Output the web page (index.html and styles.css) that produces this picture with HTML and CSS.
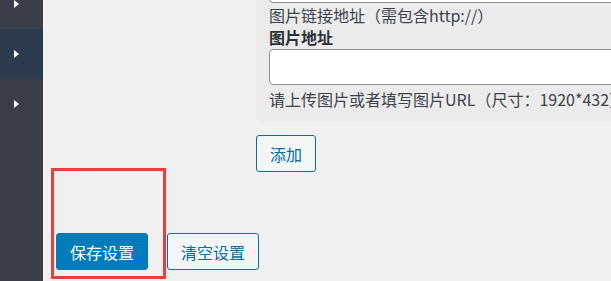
FILE: index.html
```html
<!DOCTYPE html>
<html lang="zh-CN">
<head>
<meta charset="utf-8">
<title>设置</title>
<link rel="stylesheet" href="styles.css">
</head>
<body>
<div class="layout">
  <nav class="sidebar">
    <div class="menu-item first"><span class="arrow"></span></div>
    <div class="menu-item active"><span class="arrow"></span></div>
    <div class="menu-item"><span class="arrow"></span></div>
  </nav>
  <main class="content">
    <div class="slide-panel">
      <div class="field-input top-input"></div>
      <p class="hint">图片链接地址（需包含http://）</p>
      <p class="label">图片地址</p>
      <div class="field-input"></div>
      <p class="hint hint-last">请上传图片或者填写图片URL（尺寸：1920*432）</p>
    </div>
    <div class="add-row">
      <button class="btn btn-secondary btn-add">添加</button>
    </div>
    <div class="actions">
      <button class="btn btn-primary btn-wide">保存设置</button>
      <button class="btn btn-secondary btn-wide">清空设置</button>
    </div>
    <div class="annotation"></div>
  </main>
</div>
</body>
</html>
```

FILE: styles.css
```css
html, body {
  margin: 0;
  padding: 0;
  height: 100%;
  overflow: hidden;
}
body {
  background: #f0f0f1;
  font-family: "Noto Sans CJK SC", "Noto Sans", sans-serif;
  font-size: 16px;
  color: #3c434a;
}
.layout {
  display: flex;
  height: 100%;
}
.sidebar {
  width: 43px;
  flex: 0 0 43px;
  background: #3a3e4b;
  height: 100%;
  display: flex;
  flex-direction: column;
}
.menu-item {
  height: 50px;
  flex: 0 0 50px;
  display: flex;
  align-items: center;
  padding-left: 14px;
  box-sizing: border-box;
}
.menu-item.first {
  margin-top: -21px;
}
.menu-item.active {
  background: #2c3b4d;
}
.arrow {
  width: 0;
  height: 0;
  border-top: 4.5px solid transparent;
  border-bottom: 4.5px solid transparent;
  border-left: 5px solid #ffffff;
}
.content {
  position: relative;
  flex: 1;
  min-width: 0;
  padding-left: 13px;
}
.slide-panel {
  margin-left: 200px;
  margin-top: -35px;
  margin-right: -40px;
  background: #ebebeb;
  border-radius: 0 0 0 6px;
  padding: 0 13px 12px;
}
.field-input {
  height: 36px;
  box-sizing: border-box;
  border: 1px solid #8c8f94;
  border-radius: 4px;
  background: #ffffff;
  margin-top: 1px;
}
.top-input {
  height: 38px;
  margin-top: 0;
}
.hint, .label {
  margin: 0;
  line-height: 22px;
  white-space: nowrap;
}
.top-input + .hint {
  margin-top: 1px;
}
.label {
  font-weight: bold;
  color: #2c3338;
}
.hint-last {
  margin-top: 3px;
}
.add-row {
  margin-left: 200px;
  margin-top: 13px;
}
.btn {
  font-family: "Noto Sans CJK SC", "Noto Sans", sans-serif;
  font-size: 16px;
  height: 37px;
  box-sizing: border-box;
  border-radius: 3px;
  border: 1px solid #0071a1;
  padding: 0;
  cursor: pointer;
  line-height: 1;
}
.btn-secondary {
  background: #f3f5f6;
  color: #0071a1;
}
.btn-primary {
  background: #007cba;
  border-color: #007cba;
  color: #ffffff;
}
.btn-add {
  width: 60px;
}
.actions {
  margin-top: 61px;
  display: flex;
  gap: 19px;
}
.btn-wide {
  width: 92px;
}
.annotation {
  position: absolute;
  left: 8px;
  top: 168px;
  width: 115px;
  height: 111px;
  box-sizing: border-box;
  border: 3px solid #f53a3a;
  pointer-events: none;
}
```
